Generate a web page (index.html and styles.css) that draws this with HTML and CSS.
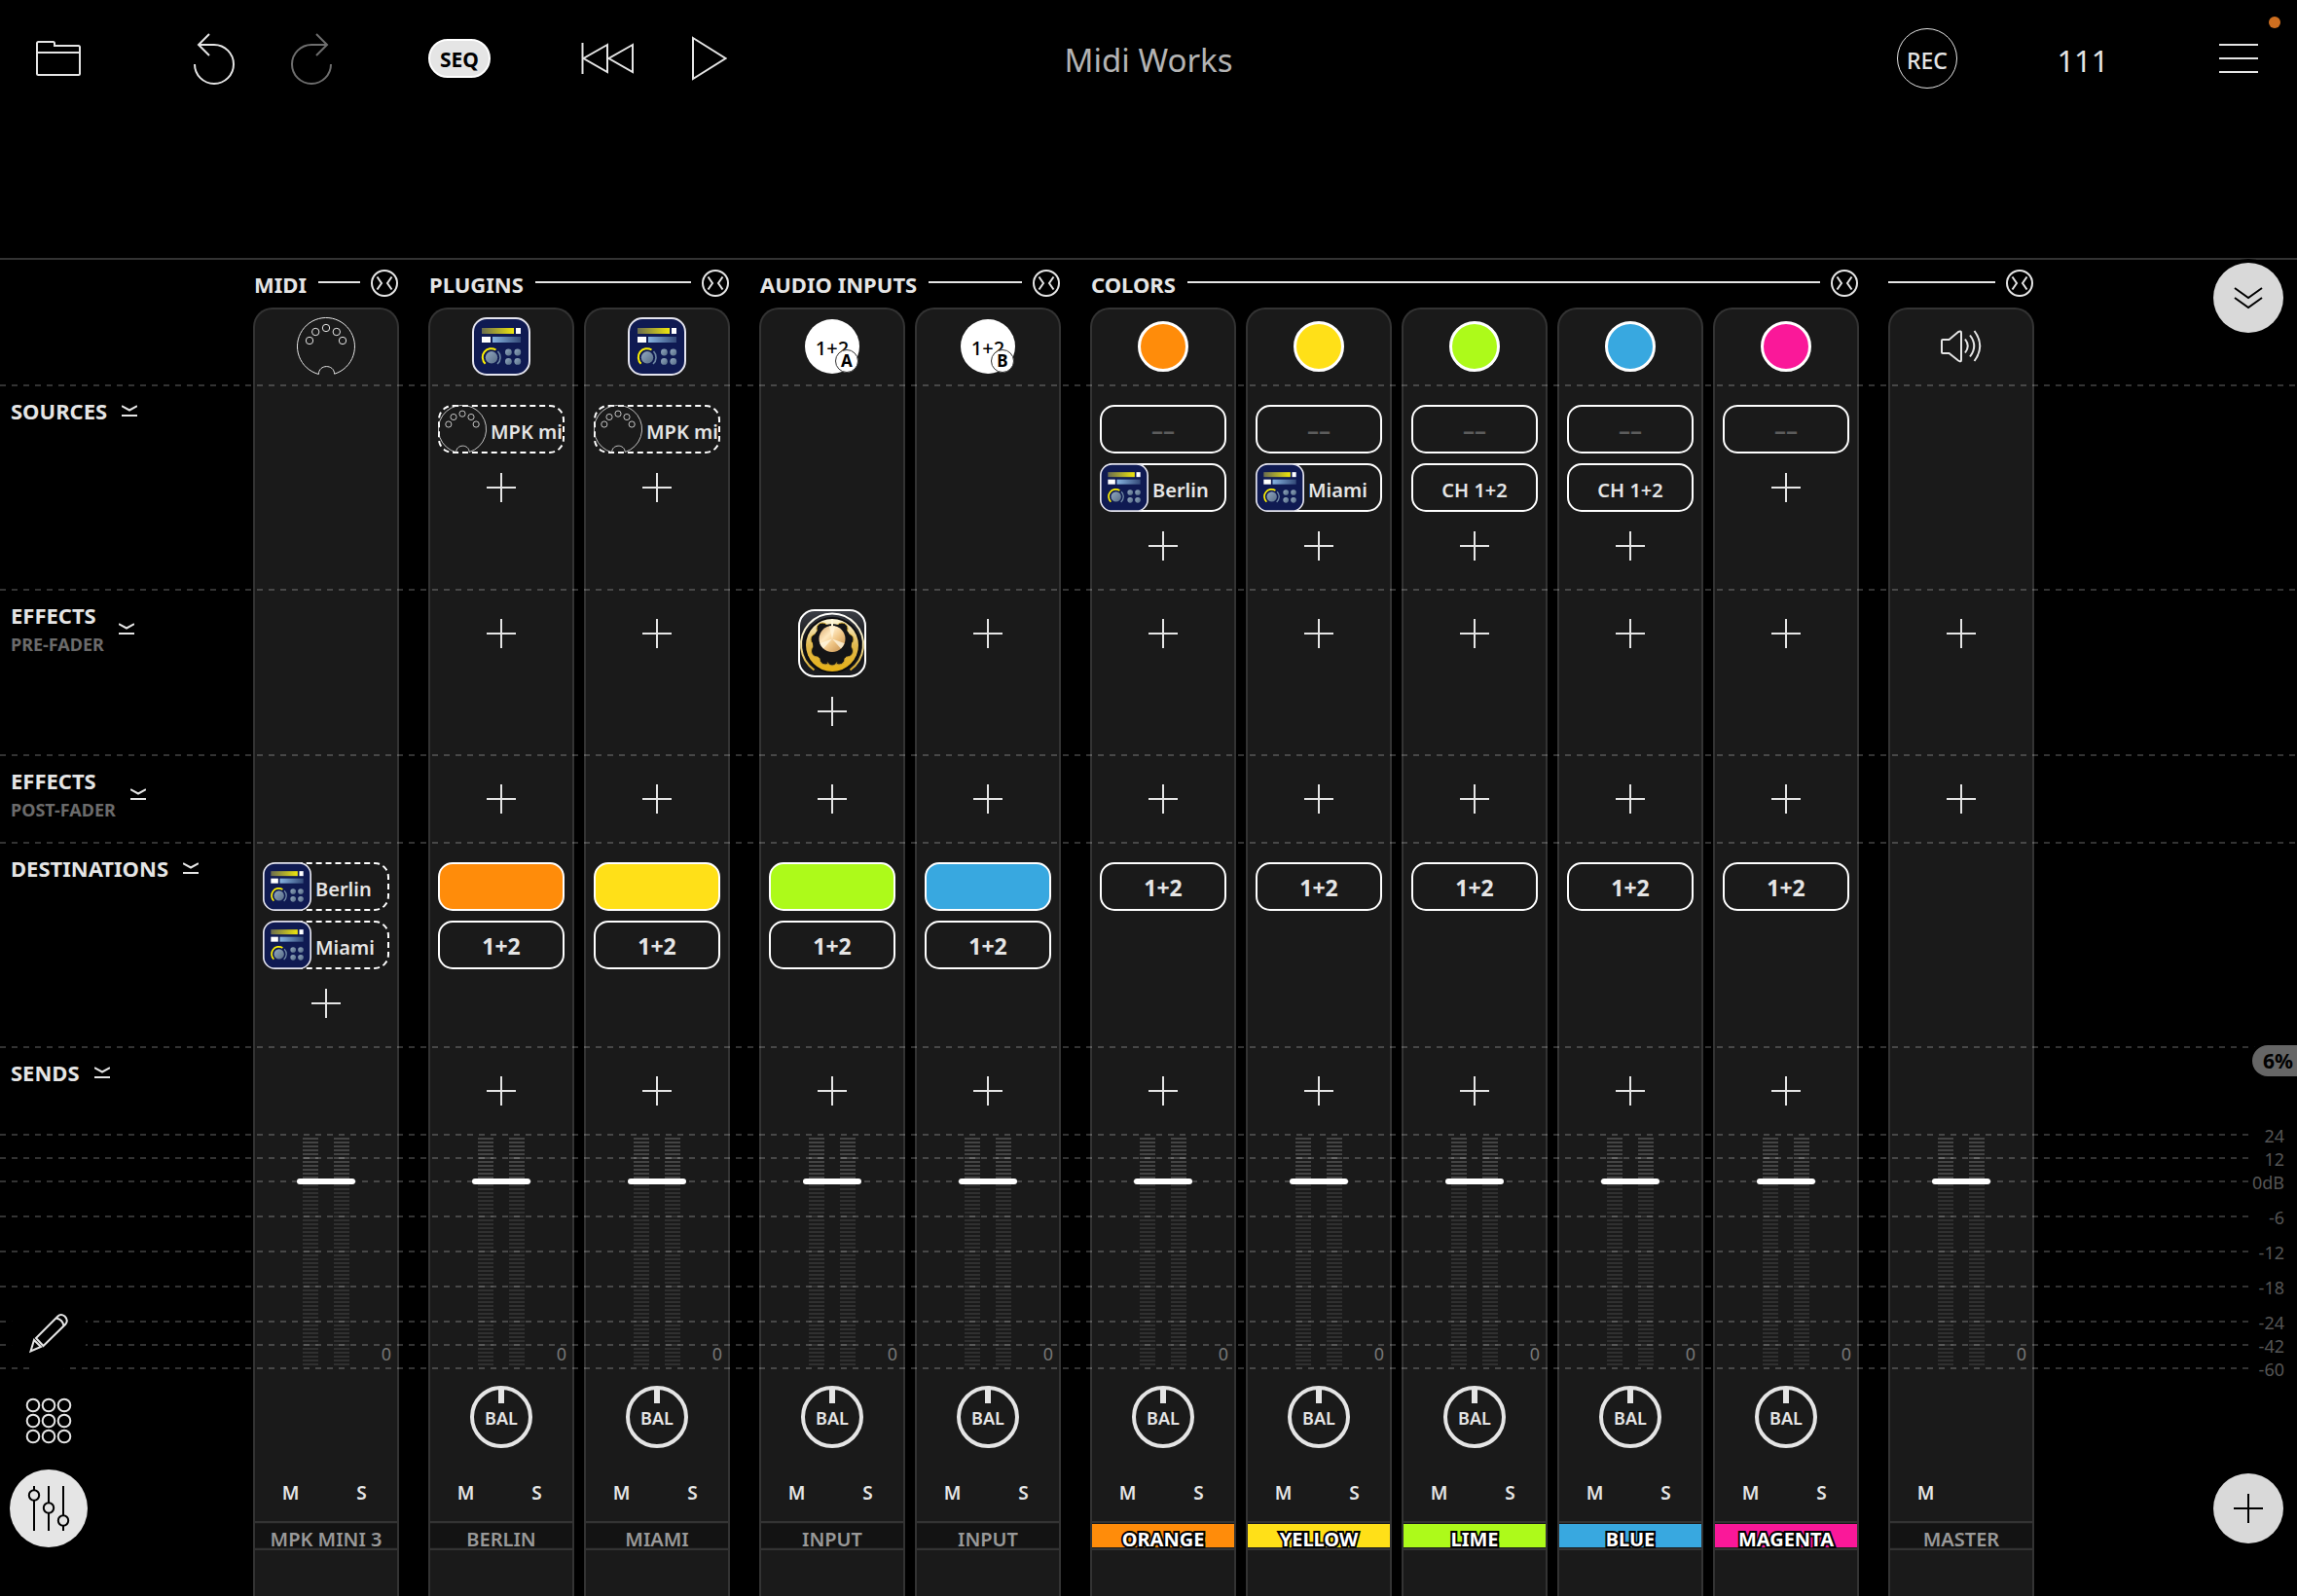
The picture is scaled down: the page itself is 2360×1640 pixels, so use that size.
FILE: index.html
```html
<!DOCTYPE html>
<html lang="en">
<head>
  <meta charset="utf-8">
  <title>Midi Works</title>
  <link rel="stylesheet" href="styles.css">
</head>
<body>
  <!-- Shared icons -->
  <svg class="sprite" aria-hidden="true">
    <defs>
      <linearGradient id="bar-yellow"><stop offset="0" stop-color="#6a6c50"/><stop offset="1" stop-color="#efe60c"/></linearGradient>
      <linearGradient id="bar-blue"><stop offset="0" stop-color="#86b3e0"/><stop offset="1" stop-color="#344a78"/></linearGradient>
      <linearGradient id="dot-blue" x1="0" y1="0" x2="1" y2="1"><stop offset="0" stop-color="#93a9c0"/><stop offset="1" stop-color="#566c86"/></linearGradient>
      <linearGradient id="fx-dark" x1="0" y1="0" x2="0" y2="1"><stop offset="0" stop-color="#3c3f47"/><stop offset="0.5" stop-color="#101114"/><stop offset="1" stop-color="#1c1d21"/></linearGradient>
      <linearGradient id="fx-gold" x1="0" y1="0" x2="0" y2="1"><stop offset="0" stop-color="#fff8dc"/><stop offset="0.5" stop-color="#e0b850"/><stop offset="1" stop-color="#e6b014"/></linearGradient>
      <linearGradient id="fx-ring" x1="0" y1="0" x2="0" y2="1"><stop offset="0" stop-color="#ffffff"/><stop offset="0.5" stop-color="#f5e7b0"/><stop offset="1" stop-color="#d8a928"/></linearGradient>
      <linearGradient id="fx-cap" x1="0" y1="0" x2="1" y2="1"><stop offset="0" stop-color="#d9a566"/><stop offset="0.35" stop-color="#ffe9c0"/><stop offset="0.6" stop-color="#eec383"/><stop offset="1" stop-color="#c08a4a"/></linearGradient>
    </defs>
    <symbol id="i-din" viewBox="0 0 60 60">
      <g fill="none" stroke="#e5e5e5">
        <path d="M22.4 58.5A29.5 29.5 0 1 1 38.6 58.2C38.2 47.8 22.4 48.2 22.4 58.5Z"/>
        <circle cx="13" cy="24" r="3.7"/><circle cx="19.2" cy="15" r="3.7"/><circle cx="30" cy="11" r="3.7"/><circle cx="40.8" cy="15" r="3.7"/><circle cx="47" cy="24" r="3.7"/>
      </g>
    </symbol>
    <symbol id="i-synth" viewBox="0 0 60 60">
      <rect x="1" y="1" width="58" height="58" rx="14" fill="#0f1a52" stroke="#e4e4ee" stroke-width="2"/>
      <rect x="10" y="11" width="33" height="6" fill="url(#bar-yellow)"/><rect x="45" y="11" width="5" height="6" fill="#fff"/>
      <rect x="10" y="20" width="9" height="6" fill="#fff"/><rect x="21" y="20" width="29" height="6" fill="url(#bar-blue)"/>
      <circle cx="20" cy="41.3" r="6.2" fill="url(#dot-blue)"/>
      <path d="M13.6 47.7A9 9 0 0 1 24.5 33.5" fill="none" stroke="#fff200" stroke-width="2"/>
      <path d="M26.5 35A9 9 0 0 1 26 48" fill="none" stroke="#6f88a4" stroke-width="1.6"/>
      <g fill="url(#dot-blue)"><circle cx="37.4" cy="36" r="3.4"/><circle cx="46.8" cy="36" r="3.4"/><circle cx="37.4" cy="45.4" r="3.4"/><circle cx="46.8" cy="45.4" r="3.4"/></g>
    </symbol>
    <symbol id="i-fx" viewBox="0 0 70 70">
      <rect x="1" y="1" width="68" height="68" rx="16" fill="url(#fx-dark)" stroke="#fff" stroke-width="2"/>
      <path d="M16.5 62.5A32 32 0 1 1 53.5 62.5" fill="none" stroke="url(#fx-ring)" stroke-width="2"/>
      <circle cx="35" cy="37" r="29" fill="#0b0b0d"/>
      <circle cx="35" cy="37" r="27" fill="url(#fx-gold)"/>
      <g fill="#141416" stroke="#c9a12b" stroke-width="1">
        <circle cx="28" cy="51" r="6"/><circle cx="42" cy="51" r="6"/><circle cx="35" cy="53" r="5"/>
        <circle cx="19.500" cy="43" r="6"/><circle cx="50.500" cy="43" r="6"/>
        <circle cx="18.500" cy="31" r="5.500"/><circle cx="51.500" cy="31" r="5.500"/>
        <circle cx="25" cy="20" r="6"/><circle cx="45" cy="20" r="6"/>
      </g>
      <circle cx="35" cy="35" r="20" fill="#141416"/>
      <path d="M34 10h2v9h-2z" fill="#fff8dc"/>
      <circle cx="35" cy="30.500" r="13.500" fill="url(#fx-cap)"/>
      <path d="M35 30.500L32 17.500A13.500 13.500 0 0 1 38 17.500ZM35 30.500L47.500 35A13.500 13.500 0 0 1 44 40.500ZM35 30.500L22.500 35A13.500 13.500 0 0 0 26 40.500Z" fill="#fff6df" opacity="0.8"/>
    </symbol>
    <symbol id="i-collapse" viewBox="0 0 28 28">
      <g fill="none" stroke="#e5e5e5" stroke-width="2">
        <circle cx="14" cy="14" r="13"/><path d="M6.500 7.500L11 14L6.500 20.500M21.500 7.500L17 14L21.500 20.500"/>
      </g>
    </symbol>
    <symbol id="i-fold" viewBox="0 0 16 12">
      <path d="M0 1.200L8 5.500L16 1.200M0 11H16" fill="none" stroke="#e5e5e5" stroke-width="2"/>
    </symbol>
  </svg>

  <header class="toolbar">
    <div class="tools">
      <button class="tool" aria-label="Projects">
        <svg width="46" height="38" viewBox="0 0 46 38" fill="none" stroke="#e5e5e5" stroke-width="2"><path d="M1 3.500Q1 2 2.500 2H17.500Q19 2 19 3.500V6H43.500Q45 6 45 7.500V34.500Q45 36 43.500 36H2.500Q1 36 1 34.500ZM1 13H45"/></svg>
      </button>
      <div class="tool-pair">
        <button class="tool" aria-label="Undo">
          <svg width="44" height="54" viewBox="0 0 44 54" fill="none" stroke="#e5e5e5" stroke-width="2"><path d="M2 33A20 20 0 1 0 22 13H6M17 2L6 13L17 24"/></svg>
        </button>
        <button class="tool" aria-label="Redo">
          <svg width="44" height="54" viewBox="0 0 44 54" fill="none" stroke="#6e6e6e" stroke-width="2"><path d="M42 33A20 20 0 1 1 22 13H38M27 2L38 13L27 24"/></svg>
        </button>
      </div>
      <div class="transport">
        <button class="seq">SEQ</button>
        <div class="playback">
          <button class="tool" aria-label="Rewind">
            <svg width="54" height="34" viewBox="0 0 54 34" fill="none" stroke="#e5e5e5" stroke-width="2"><path d="M1.500 1V33M27 3L2.500 17L27 31ZM53 3L28.500 17L53 31Z"/></svg>
          </button>
          <button class="tool" aria-label="Play">
            <svg width="36" height="46" viewBox="0 0 36 46" fill="none" stroke="#e5e5e5" stroke-width="2"><path d="M1 2L34.500 23L1 44Z"/></svg>
          </button>
        </div>
      </div>
    </div>
    <h1 class="title">Midi Works</h1>
    <div class="session">
      <button class="rec">REC</button>
      <button class="tempo">111</button>
      <button class="menu" aria-label="Menu"><i></i><i></i><i></i></button>
    </div>
    <span class="mic-dot"></span>
  </header>

  <main class="mixer">
    <div class="board">
      <section class="group">
        <header class="group-head"><h2>MIDI</h2><hr><button aria-label="Collapse"><svg><use href="#i-collapse"/></svg></button></header>
        <div class="strips">
          <article class="strip">
            <div class="head"><svg class="ico"><use href="#i-din"/></svg></div>
            <div class="slot"></div>
            <div class="slot"></div>
            <div class="slot"></div>
            <div class="slot">
              <button class="chip linked"><svg><use href="#i-synth"/></svg><span>Berlin</span></button>
              <button class="chip linked"><svg><use href="#i-synth"/></svg><span>Miami</span></button>
              <button class="add" aria-label="Add"></button>
            </div>
            <div class="slot"></div>
            <div class="level"><div class="meter"></div><input type="range" min="0" max="234" value="188" aria-label="Level"><output>0</output></div>
            <div class="pan"></div>
            <div class="ms"><button>M</button><button>S</button></div>
            <div class="name">MPK MINI 3</div>
          </article>
        </div>
      </section>

      <section class="group">
        <header class="group-head"><h2>PLUGINS</h2><hr><button aria-label="Collapse"><svg><use href="#i-collapse"/></svg></button></header>
        <div class="strips">
          <article class="strip">
            <div class="head"><svg class="ico"><use href="#i-synth"/></svg></div>
            <div class="slot">
              <button class="chip linked"><svg><use href="#i-din"/></svg><span>MPK mini 3</span></button>
              <button class="add" aria-label="Add"></button>
            </div>
            <div class="slot"><button class="add" aria-label="Add"></button></div>
            <div class="slot"><button class="add" aria-label="Add"></button></div>
            <div class="slot">
              <button class="chip orange" aria-label="Orange"></button>
              <button class="chip out">1+2</button>
            </div>
            <div class="slot"><button class="add" aria-label="Add"></button></div>
            <div class="level"><div class="meter"></div><input type="range" min="0" max="234" value="188" aria-label="Level"><output>0</output></div>
            <div class="pan"><button class="knob">BAL</button></div>
            <div class="ms"><button>M</button><button>S</button></div>
            <div class="name">BERLIN</div>
          </article>
          <article class="strip">
            <div class="head"><svg class="ico"><use href="#i-synth"/></svg></div>
            <div class="slot">
              <button class="chip linked"><svg><use href="#i-din"/></svg><span>MPK mini 3</span></button>
              <button class="add" aria-label="Add"></button>
            </div>
            <div class="slot"><button class="add" aria-label="Add"></button></div>
            <div class="slot"><button class="add" aria-label="Add"></button></div>
            <div class="slot">
              <button class="chip yellow" aria-label="Yellow"></button>
              <button class="chip out">1+2</button>
            </div>
            <div class="slot"><button class="add" aria-label="Add"></button></div>
            <div class="level"><div class="meter"></div><input type="range" min="0" max="234" value="188" aria-label="Level"><output>0</output></div>
            <div class="pan"><button class="knob">BAL</button></div>
            <div class="ms"><button>M</button><button>S</button></div>
            <div class="name">MIAMI</div>
          </article>
        </div>
      </section>

      <section class="group">
        <header class="group-head"><h2>AUDIO INPUTS</h2><hr><button aria-label="Collapse"><svg><use href="#i-collapse"/></svg></button></header>
        <div class="strips">
          <article class="strip">
            <div class="head"><div class="jack">1+2<b>A</b></div></div>
            <div class="slot"></div>
            <div class="slot">
              <button class="fx" aria-label="Effect"><svg><use href="#i-fx"/></svg></button>
              <button class="add" aria-label="Add"></button>
            </div>
            <div class="slot"><button class="add" aria-label="Add"></button></div>
            <div class="slot">
              <button class="chip lime" aria-label="Lime"></button>
              <button class="chip out">1+2</button>
            </div>
            <div class="slot"><button class="add" aria-label="Add"></button></div>
            <div class="level"><div class="meter"></div><input type="range" min="0" max="234" value="188" aria-label="Level"><output>0</output></div>
            <div class="pan"><button class="knob">BAL</button></div>
            <div class="ms"><button>M</button><button>S</button></div>
            <div class="name">INPUT</div>
          </article>
          <article class="strip">
            <div class="head"><div class="jack">1+2<b>B</b></div></div>
            <div class="slot"></div>
            <div class="slot"><button class="add" aria-label="Add"></button></div>
            <div class="slot"><button class="add" aria-label="Add"></button></div>
            <div class="slot">
              <button class="chip blue" aria-label="Blue"></button>
              <button class="chip out">1+2</button>
            </div>
            <div class="slot"><button class="add" aria-label="Add"></button></div>
            <div class="level"><div class="meter"></div><input type="range" min="0" max="234" value="188" aria-label="Level"><output>0</output></div>
            <div class="pan"><button class="knob">BAL</button></div>
            <div class="ms"><button>M</button><button>S</button></div>
            <div class="name">INPUT</div>
          </article>
        </div>
      </section>

      <section class="group">
        <header class="group-head"><h2>COLORS</h2><hr><button aria-label="Collapse"><svg><use href="#i-collapse"/></svg></button></header>
        <div class="strips">
          <article class="strip">
            <div class="head"><div class="dot orange"></div></div>
            <div class="slot">
              <button class="chip none">––</button>
              <button class="chip"><svg><use href="#i-synth"/></svg><span>Berlin</span></button>
              <button class="add" aria-label="Add"></button>
            </div>
            <div class="slot"><button class="add" aria-label="Add"></button></div>
            <div class="slot"><button class="add" aria-label="Add"></button></div>
            <div class="slot"><button class="chip out">1+2</button></div>
            <div class="slot"><button class="add" aria-label="Add"></button></div>
            <div class="level"><div class="meter"></div><input type="range" min="0" max="234" value="188" aria-label="Level"><output>0</output></div>
            <div class="pan"><button class="knob">BAL</button></div>
            <div class="ms"><button>M</button><button>S</button></div>
            <div class="name bus orange">ORANGE</div>
          </article>
          <article class="strip">
            <div class="head"><div class="dot yellow"></div></div>
            <div class="slot">
              <button class="chip none">––</button>
              <button class="chip"><svg><use href="#i-synth"/></svg><span>Miami</span></button>
              <button class="add" aria-label="Add"></button>
            </div>
            <div class="slot"><button class="add" aria-label="Add"></button></div>
            <div class="slot"><button class="add" aria-label="Add"></button></div>
            <div class="slot"><button class="chip out">1+2</button></div>
            <div class="slot"><button class="add" aria-label="Add"></button></div>
            <div class="level"><div class="meter"></div><input type="range" min="0" max="234" value="188" aria-label="Level"><output>0</output></div>
            <div class="pan"><button class="knob">BAL</button></div>
            <div class="ms"><button>M</button><button>S</button></div>
            <div class="name bus yellow">YELLOW</div>
          </article>
          <article class="strip">
            <div class="head"><div class="dot lime"></div></div>
            <div class="slot">
              <button class="chip none">––</button>
              <button class="chip text">CH 1+2</button>
              <button class="add" aria-label="Add"></button>
            </div>
            <div class="slot"><button class="add" aria-label="Add"></button></div>
            <div class="slot"><button class="add" aria-label="Add"></button></div>
            <div class="slot"><button class="chip out">1+2</button></div>
            <div class="slot"><button class="add" aria-label="Add"></button></div>
            <div class="level"><div class="meter"></div><input type="range" min="0" max="234" value="188" aria-label="Level"><output>0</output></div>
            <div class="pan"><button class="knob">BAL</button></div>
            <div class="ms"><button>M</button><button>S</button></div>
            <div class="name bus lime">LIME</div>
          </article>
          <article class="strip">
            <div class="head"><div class="dot blue"></div></div>
            <div class="slot">
              <button class="chip none">––</button>
              <button class="chip text">CH 1+2</button>
              <button class="add" aria-label="Add"></button>
            </div>
            <div class="slot"><button class="add" aria-label="Add"></button></div>
            <div class="slot"><button class="add" aria-label="Add"></button></div>
            <div class="slot"><button class="chip out">1+2</button></div>
            <div class="slot"><button class="add" aria-label="Add"></button></div>
            <div class="level"><div class="meter"></div><input type="range" min="0" max="234" value="188" aria-label="Level"><output>0</output></div>
            <div class="pan"><button class="knob">BAL</button></div>
            <div class="ms"><button>M</button><button>S</button></div>
            <div class="name bus blue">BLUE</div>
          </article>
          <article class="strip">
            <div class="head"><div class="dot magenta"></div></div>
            <div class="slot">
              <button class="chip none">––</button>
              <button class="add" aria-label="Add"></button>
            </div>
            <div class="slot"><button class="add" aria-label="Add"></button></div>
            <div class="slot"><button class="add" aria-label="Add"></button></div>
            <div class="slot"><button class="chip out">1+2</button></div>
            <div class="slot"><button class="add" aria-label="Add"></button></div>
            <div class="level"><div class="meter"></div><input type="range" min="0" max="234" value="188" aria-label="Level"><output>0</output></div>
            <div class="pan"><button class="knob">BAL</button></div>
            <div class="ms"><button>M</button><button>S</button></div>
            <div class="name bus magenta">MAGENTA</div>
          </article>
        </div>
      </section>

      <section class="group">
        <header class="group-head"><hr><button aria-label="Collapse"><svg><use href="#i-collapse"/></svg></button></header>
        <div class="strips">
          <article class="strip">
            <div class="head">
              <svg width="44" height="36" viewBox="0 0 44 36" fill="none" stroke="#e5e5e5" stroke-width="2"><path d="M3 11H9.500L19 3Q22 1.500 22 4V32Q22 34.500 19 32.500L9.500 25H3Q2 25 2 24V12Q2 11 3 11ZM26 10.500Q31.500 17.500 26 24.500M31 6.500Q39.500 17.500 31 28.500M35.500 2Q47 17.500 35.500 33"/></svg>
            </div>
            <div class="slot"></div>
            <div class="slot"><button class="add" aria-label="Add"></button></div>
            <div class="slot"><button class="add" aria-label="Add"></button></div>
            <div class="slot"></div>
            <div class="slot"></div>
            <div class="level"><div class="meter"></div><input type="range" min="0" max="234" value="188" aria-label="Level"><output>0</output></div>
            <div class="pan"></div>
            <div class="ms"><button>M</button></div>
            <div class="name">MASTER</div>
          </article>
        </div>
      </section>
    </div>

    <!-- Row captions and dashed guides, drawn across all strips -->
    <div class="lanes">
      <div class="lane"><h3>SOURCES</h3><svg class="fold"><use href="#i-fold"/></svg></div>
      <div class="lane"><h3>EFFECTS<small>PRE-FADER</small></h3><svg class="fold"><use href="#i-fold"/></svg></div>
      <div class="lane"><h3>EFFECTS<small>POST-FADER</small></h3><svg class="fold"><use href="#i-fold"/></svg></div>
      <div class="lane"><h3>DESTINATIONS</h3><svg class="fold"><use href="#i-fold"/></svg></div>
      <div class="lane"><h3>SENDS</h3><svg class="fold"><use href="#i-fold"/></svg></div>
      <div class="scale">
        <div class="tick">24</div>
        <div class="tick">12</div>
        <div class="tick wide">0dB</div>
        <div class="tick wide">-6</div>
        <div class="tick wide">-12</div>
        <div class="tick wide">-18</div>
        <div class="tick">-24</div>
        <div class="tick">-42</div>
        <div class="tick">-60</div>
      </div>
    </div>

    <button class="round hide" aria-label="Collapse mixer">
      <svg width="30" height="24" viewBox="0 0 30 24" fill="none" stroke="#000" stroke-width="2"><path d="M1 2L15 12L29 2M1 12L15 22L29 12"/></svg>
    </button>
    <span class="cpu">6%</span>
  </main>

  <nav class="views">
    <button aria-label="Edit">
      <svg width="42" height="42" viewBox="0 0 42 42" fill="none" stroke="#e5e5e5" stroke-width="2"><path d="M2.500 39.500L6 28L13 35ZM8 26L30.500 3.500Q33.500 0.500 37.500 3.500Q41.500 7.500 38.500 11.500L15.500 34ZM29 5.500Q35.500 7 36.500 13.500"/></svg>
    </button>
    <button aria-label="Pads">
      <svg width="48" height="48" viewBox="0 0 48 48" fill="none" stroke="#e5e5e5" stroke-width="2"><circle cx="8" cy="8" r="6.300"/><circle cx="24" cy="8" r="6.300"/><circle cx="40" cy="8" r="6.300"/><circle cx="8" cy="24" r="6.300"/><circle cx="24" cy="24" r="6.300"/><circle cx="40" cy="24" r="6.300"/><circle cx="8" cy="40" r="6.300"/><circle cx="24" cy="40" r="6.300"/><circle cx="40" cy="40" r="6.300"/></svg>
    </button>
    <button class="active" aria-label="Mixer">
      <svg width="44" height="46" viewBox="0 0 44 46" fill="#e5e5e5" stroke="#000" stroke-width="2"><path d="M7 0V46M22 0V46M37 0V46"/><circle cx="7" cy="9.500" r="5.200"/><circle cx="22" cy="22.500" r="5.200"/><circle cx="37" cy="35.500" r="5.200"/></svg>
    </button>
  </nav>
  <button class="round new" aria-label="Add channel"></button>
</body>
</html>
```
FILE: styles.css
```css
* {
  box-sizing: border-box;
}
body {
  margin: 0;
  min-height: 100vh;
  display: flex;
  flex-direction: column;
  position: relative;
  overflow: hidden;
  background: #000;
  color: #e5e5e5;
  font-family: "Noto Sans", sans-serif;
}
button {
  padding: 0;
  border: none;
  background: none;
  color: inherit;
  font: inherit;
  cursor: pointer;
}
h1, h2, h3 {
  margin: 0;
}
svg {
  display: block;
  flex: none;
}
.sprite {
  position: absolute;
  width: 0;
  height: 0;
}

/* colours of the buses */
.orange { background: #ff8c0a; }
.yellow { background: #ffe018; }
.lime { background: #adfa1a; }
.blue { background: #38a8e0; }
.magenta { background: #fa1899; }

/* toolbar */
.toolbar {
  display: grid;
  grid-template-columns: 1fr auto 1fr;
  align-items: center;
  height: 120px;
  margin-bottom: 145px;
  padding: 0 29px;
}
.tools, .tool-pair, .transport, .playback, .session {
  display: flex;
  align-items: center;
}
.tools { gap: 89px; }
.tool-pair {
  gap: 38px;
  margin-left: 9px;
}
.transport { gap: 89px; }
.playback { gap: 43px; }
.tool {
  width: 62px;
  height: 62px;
  display: flex;
  align-items: center;
  justify-content: center;
}
.seq {
  width: 64px;
  height: 40px;
  padding-top: 2px;
  border: 2px solid #fff;
  border-radius: 20px;
  background: #e5e5e5;
  color: #000;
  font-size: 21px;
  font-weight: 700;
  line-height: 34px;
}
.title {
  padding-top: 3px;
  color: #b4b4b4;
  font-size: 33px;
  font-weight: 400;
}
.session {
  justify-content: flex-end;
  gap: 100px;
}
.rec {
  width: 62px;
  height: 62px;
  padding-top: 3px;
  border: 1px solid #e5e5e5;
  border-radius: 50%;
  font-size: 23px;
  font-weight: 500;
}
.tempo {
  width: 58px;
  padding-top: 3px;
  font-size: 31px;
}
.menu {
  width: 62px;
  display: flex;
  flex-direction: column;
  align-items: center;
  gap: 12px;
}
.menu i {
  width: 40px;
  height: 2px;
  background: #e5e5e5;
}
.mic-dot {
  position: absolute;
  top: 17px;
  right: 17px;
  width: 12px;
  height: 12px;
  border-radius: 50%;
  background: #cf6f20;
}

/* mixer */
.mixer {
  flex: 1;
  display: flex;
  position: relative;
  border-top: 2px solid #333;
}
.board {
  display: flex;
  gap: 30px;
  padding-left: 260px;
}
.group {
  display: flex;
  flex-direction: column;
}
.group-head {
  display: flex;
  align-items: center;
  height: 49px;
  padding: 0 1px 1px 0;
}
.group-head h2 {
  margin: 0 12px 0 1px;
  padding-top: 1px;
  font-size: 22px;
  line-height: 28px;
}
.group-head hr {
  flex: 1;
  height: 2px;
  margin: 0 11px 2px 0;
  border: none;
  background: #e5e5e5;
}
.group-head svg {
  width: 28px;
  height: 28px;
}
.strips {
  flex: 1;
  display: flex;
  gap: 10px;
}
.strip {
  display: grid;
  grid-template-columns: minmax(0, 1fr);
  grid-template-rows: 77px 210px 170px 90px 210px 90px 240px 102px 56px 30px 1fr;
  width: 150px;
  border: 2px solid #333;
  border-bottom: none;
  border-radius: 20px 20px 0 0;
  background: #1a1a1a;
}
.head {
  display: flex;
  align-items: center;
  justify-content: center;
  padding-bottom: 1px;
}
.ico {
  width: 60px;
  height: 60px;
}
.dot {
  width: 52px;
  height: 52px;
  border: 3px solid #fff;
  border-radius: 50%;
}
.jack {
  position: relative;
  width: 56px;
  height: 56px;
  border-radius: 50%;
  background: #fff;
  color: #000;
  font-size: 20px;
  font-weight: 500;
  line-height: 60px;
  text-align: center;
}
.jack b {
  position: absolute;
  right: 1px;
  bottom: 1px;
  width: 24px;
  height: 24px;
  border: 1px solid #333;
  border-radius: 50%;
  background: #fff;
  font-size: 17px;
  line-height: 22px;
}

/* slots */
.slot {
  display: flex;
  flex-direction: column;
  align-items: center;
  gap: 10px;
  padding: 21px 8px 0;
}
.chip {
  width: 100%;
  height: 50px;
  display: flex;
  align-items: center;
  justify-content: center;
  border: 2px solid #fff;
  border-radius: 15px;
  font-size: 20px;
  font-weight: 600;
}
.chip.linked {
  border-style: dashed;
}
.chip svg {
  width: 50px;
  height: 50px;
  margin: -2px 4px -2px -2px;
}
.chip span {
  flex: 1;
  min-width: 0;
  padding-top: 5px;
  overflow: hidden;
  white-space: nowrap;
  text-align: left;
}
.chip.text {
  padding-top: 5px;
}
.chip.out {
  padding-top: 2px;
  font-size: 23px;
  font-weight: 700;
}
.chip.none {
  color: #5c5c5c;
  font-size: 24px;
  font-weight: 700;
}
.add {
  width: 50px;
  height: 50px;
  background:
    linear-gradient(#e5e5e5, #e5e5e5) center / 30px 2px no-repeat,
    linear-gradient(#e5e5e5, #e5e5e5) center / 2px 30px no-repeat;
}
.fx svg {
  width: 70px;
  height: 70px;
}

/* fader and meters */
.level {
  display: grid;
}
.level > * {
  grid-area: 1 / 1;
}
.meter {
  justify-self: center;
  width: 48px;
  margin: 4px 0 2px;
  background:
    linear-gradient(90deg, transparent 16px, #1a1a1a 16px 32px, transparent 32px),
    repeating-linear-gradient(#444 0 2px, transparent 2px 4px) top / 100% 42px no-repeat,
    repeating-linear-gradient(#303030 0 2px, transparent 2px 4px);
}
.level input {
  appearance: none;
  writing-mode: vertical-lr;
  direction: rtl;
  justify-self: center;
  position: relative;
  z-index: 2;
  width: 60px;
  height: 240px;
  margin: 0;
  background: none;
}
.level input::-webkit-slider-thumb {
  appearance: none;
  width: 60px;
  height: 6px;
  border-radius: 3px;
  background: #fff;
}
.level output {
  place-self: end;
  margin: 0 6px 4px 0;
  color: #777;
  font-size: 18px;
  line-height: 20px;
}

/* channel controls */
.pan {
  padding-top: 19px;
}
.knob {
  display: block;
  width: 64px;
  height: 64px;
  margin: 0 auto;
  padding-top: 1px;
  border: 4px solid #e5e5e5;
  border-radius: 50%;
  background: linear-gradient(#e5e5e5, #e5e5e5) top / 6px 14px no-repeat;
  font-size: 18px;
  font-weight: 600;
}
.ms {
  display: grid;
  grid-template-columns: 1fr 1fr;
  padding-bottom: 3px;
  font-size: 19px;
  font-weight: 600;
}
.name {
  border-top: 2px solid #333;
  border-bottom: 2px solid #333;
  box-shadow: inset 0 1px #1a1a1a, inset 0 -1px #1a1a1a;
  color: #999;
  font-size: 20px;
  font-weight: 600;
  line-height: 34px;
  text-align: center;
}
.name:not(.bus) {
  background: #131313;
}
.name.bus {
  color: #fff;
  font-weight: 700;
  -webkit-text-stroke: 4px #000;
  paint-order: stroke fill;
}

/* row captions and guides */
.lanes {
  position: absolute;
  z-index: 1;
  top: 128px;
  left: 0;
  right: 0;
  display: grid;
  grid-template-rows: 210px 170px 90px 210px 90px auto;
  pointer-events: none;
}
.lane, .tick {
  background: repeating-linear-gradient(90deg, rgba(255, 255, 255, 0.2) 0 6px, transparent 6px 12px) 0 0 / 100% 2px no-repeat;
}
.lane {
  display: flex;
  align-items: flex-start;
  gap: 15px;
  padding: 12px 11px 0;
}
.lane h3 {
  font-size: 22px;
  line-height: 30px;
}
.lane small {
  display: block;
  color: #6b6b6b;
  font-size: 18px;
  font-weight: 700;
  line-height: 30px;
}
.fold {
  width: 16px;
  height: 12px;
  margin-top: 9px;
}
.lane h3:has(small) + .fold {
  margin-top: 23px;
}
.scale {
  margin-top: -8px;
}
.tick {
  height: 24px;
  padding-right: 13px;
  background-size: calc(100% - 50px) 2px;
  background-position: 0 8px;
  color: #555;
  font-size: 18px;
  line-height: 20px;
  text-align: right;
}
.tick.wide {
  height: 36px;
}

/* floating controls */
.round {
  position: absolute;
  z-index: 3;
  right: 14px;
  width: 72px;
  height: 72px;
  display: flex;
  align-items: center;
  justify-content: center;
  border-radius: 50%;
  background: #d9d9d9;
  box-shadow: 0 0 0 4px #000;
}
.round.hide {
  top: 3px;
}
.round.new {
  bottom: 54px;
  background:
    linear-gradient(#000, #000) center / 30px 2px no-repeat,
    linear-gradient(#000, #000) center / 2px 30px no-repeat,
    #d9d9d9;
}
.cpu {
  position: absolute;
  z-index: 3;
  top: 807px;
  right: 0;
  padding: 1px 4px 0 11px;
  border-radius: 16px 0 0 16px;
  background: #666;
  box-shadow: 0 0 0 4px #000;
  color: #000;
  font-size: 21px;
  font-weight: 700;
  line-height: 31px;
}
.views {
  position: absolute;
  z-index: 3;
  left: 10px;
  bottom: 50px;
  display: flex;
  flex-direction: column;
  gap: 10px;
}
.views button {
  width: 80px;
  height: 80px;
  display: flex;
  align-items: center;
  justify-content: center;
  border-radius: 50%;
  background: #000;
}
.views .active {
  background: #e5e5e5;
}
```
